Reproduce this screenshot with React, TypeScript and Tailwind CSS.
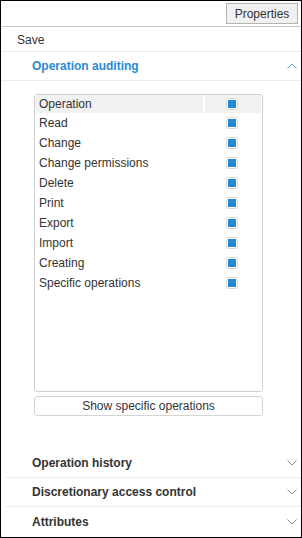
import React from 'react';

const operations = [
  'Read',
  'Change',
  'Change permissions',
  'Delete',
  'Print',
  'Export',
  'Import',
  'Creating',
  'Specific operations',
];

function Chevron({ up, color }: { up?: boolean; color: string }) {
  return (
    <svg width="10" height="6" viewBox="0 0 10 6" className="shrink-0">
      <polyline
        points={up ? '0.5,5.5 5,1 9.5,5.5' : '0.5,0.5 5,5 9.5,0.5'}
        fill="none"
        stroke={color}
        strokeWidth="1"
      />
    </svg>
  );
}

function Check() {
  return (
    <span className="flex h-[12px] w-[12px] items-center justify-center rounded-[2px] border border-[#dcdcdc] bg-white">
      <span className="block h-[8px] w-[8px] bg-[#2489d2]" />
    </span>
  );
}

function App() {
  return (
    <div
      className="flex h-[538px] w-[302px] flex-col overflow-hidden border border-black bg-white text-[12px] text-[#333]"
      style={{ fontFamily: '"Liberation Sans", Arial, sans-serif' }}
    >
      {/* toolbar */}
      <div className="flex h-[26px] shrink-0 justify-end border-b border-[#c8c8c8] pr-[3px] pt-[2px]">
        <button className="h-[21px] w-[72px] border border-[#b4b4b4] bg-[#f0f0f0] text-[12px] text-[#333]">
          Properties
        </button>
      </div>

      {/* Save */}
      <div className="flex h-[25px] shrink-0 items-center border-b border-[#ececec] pl-[16px] pt-[1px]">
        Save
      </div>

      {/* Operation auditing */}
      <div className="flex h-[29px] shrink-0 items-center justify-between border-b border-[#ececec] pl-[31px] pr-[4px]">
        <span className="font-bold text-[#2a8ad0]">Operation auditing</span>
        <Chevron up color="#4a9fdc" />
      </div>

      <div className="flex flex-1 flex-col pl-[33px] pt-[13px]">
        <div className="h-[298px] w-[229px] rounded-[3px] border border-[#cfcfcf]">
          <div className="mr-[1px] flex h-[18px] bg-[#f1f1f1]">
            <div className="flex flex-1 items-center border-r-2 border-white pl-[4px]">Operation</div>
            <div className="flex w-[56px] items-center pl-[21px]">
              <Check />
            </div>
          </div>
          {operations.map((op) => (
            <div key={op} className="flex h-[20px] items-center">
              <div className="flex-1 pl-[4px]">{op}</div>
              <div className="flex w-[57px] items-center pl-[21px]">
                <Check />
              </div>
            </div>
          ))}
        </div>
        <button className="mt-[4px] h-[20px] w-[229px] rounded-[3px] border border-[#d4d4d4] bg-white text-[12px] text-[#333]">
          Show specific operations
        </button>
      </div>

      {/* collapsed sections */}
      <div className="ml-[4px] flex h-[30px] shrink-0 items-center justify-between border-b border-[#ececec] pl-[27px] pr-[4px]">
        <span className="font-bold">Operation history</span>
        <Chevron color="#8a8a8a" />
      </div>
      <div className="ml-[4px] flex h-[29px] shrink-0 items-center justify-between border-b border-[#ececec] pl-[27px] pr-[4px]">
        <span className="font-bold">Discretionary access control</span>
        <Chevron color="#8a8a8a" />
      </div>
      <div className="ml-[4px] flex h-[30px] shrink-0 items-center justify-between pl-[27px] pr-[4px]">
        <span className="font-bold">Attributes</span>
        <Chevron color="#8a8a8a" />
      </div>
    </div>
  );
}

export default App;
